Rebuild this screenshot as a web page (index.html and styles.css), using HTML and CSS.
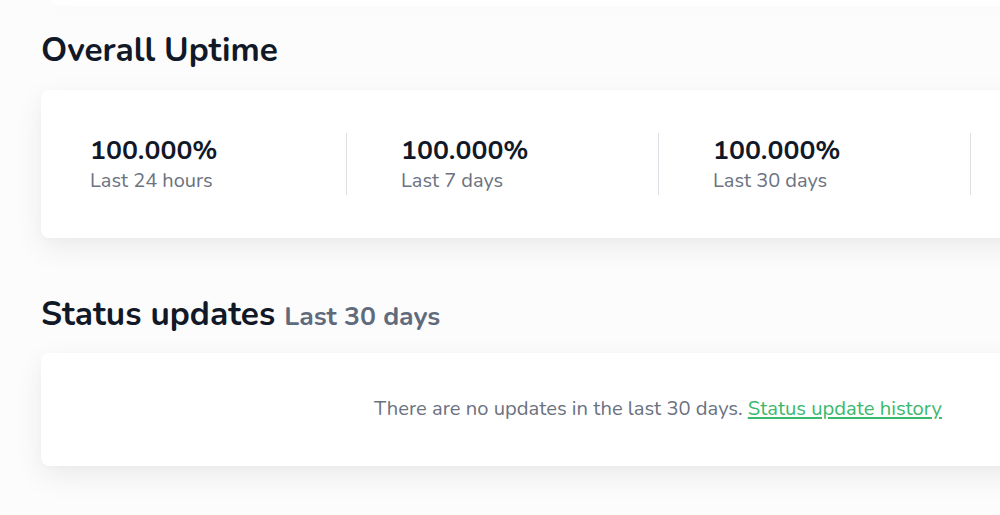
FILE: index.html
```html
<!DOCTYPE html>
<html lang="en">
<head>
<meta charset="utf-8">
<title>Status</title>
<link rel="stylesheet" href="styles.css">
</head>
<body>
<div class="page">
  <div class="top-ghost"></div>
  <section class="section">
    <h2 class="heading">Overall Uptime</h2>
    <div class="card uptime">
      <div class="stat first">
        <div class="value">100.000%</div>
        <div class="label">Last 24 hours</div>
      </div>
      <div class="stat">
        <div class="value">100.000%</div>
        <div class="label">Last 7 days</div>
      </div>
      <div class="stat">
        <div class="value">100.000%</div>
        <div class="label">Last 30 days</div>
      </div>
      <div class="stat last"></div>
    </div>
  </section>
  <section class="section second">
    <h2 class="heading">Status updates <span class="sub">Last 30 days</span></h2>
    <div class="card updates">
      <p class="empty">There are no updates in the last 30 days. <a href="#" class="link">Status update history</a></p>
    </div>
  </section>
</div>
</body>
</html>
```
FILE: styles.css
```css
html, body {
  margin: 0;
  padding: 0;
  background: #fcfcfc;
  overflow: hidden;
}
body {
  font-family: "Nunito", "Lato", "Open Sans", sans-serif;
  color: #111827;
  width: 1000px;
  height: 515px;
}
.page {
  width: 1234px;
  padding-left: 41px;
  position: relative;
}
.top-ghost {
  position: absolute;
  left: 50px;
  right: 0;
  top: -40px;
  height: 46px;
  background: #fefefe;
  border-radius: 8px;
  box-shadow: 0 6px 20px rgba(0, 0, 0, 0.01);
}
.section {
  position: relative;
  padding-top: 30px;
}
.section.second {
  padding-top: 56px;
}
.heading {
  margin: 0 0 20px 0;
  font-size: 33.4px;
  font-weight: 700;
  line-height: 40px;
  color: #111827;
}
.second .heading {
  margin-bottom: 17px;
}
.sub {
  font-size: 26.6px;
  color: #5f6b7d;
  font-weight: 700;
}
.card {
  background: #ffffff;
  border-radius: 8px;
  box-shadow: 0 10px 30px rgba(0, 0, 0, 0.07), 0 2px 6px rgba(0, 0, 0, 0.02);
}
.uptime {
  display: flex;
  height: 148px;
  align-items: center;
}
.stat {
  flex: 0 0 312px;
  box-sizing: border-box;
  border-left: 1px solid #dcdfe4;
  padding-left: 54px;
  height: 62px;
  display: flex;
  flex-direction: column;
  justify-content: center;
}
.stat.first {
  border-left: none;
  flex-basis: 305px;
  padding-left: 49px;
}
.value {
  font-size: 26.6px;
  font-weight: 700;
  line-height: 32px;
  color: #111827;
}
.label {
  font-size: 20px;
  line-height: 26px;
  color: #6b7280;
  margin-top: 2px;
}
.updates {
  height: 113px;
  display: flex;
  align-items: center;
  justify-content: center;
}
.empty {
  margin: 0 0 3px 0;
  font-size: 20.2px;
  color: #6b7280;
  text-align: center;
}
.link {
  color: #3cb86c;
  text-decoration: underline;
}
```
